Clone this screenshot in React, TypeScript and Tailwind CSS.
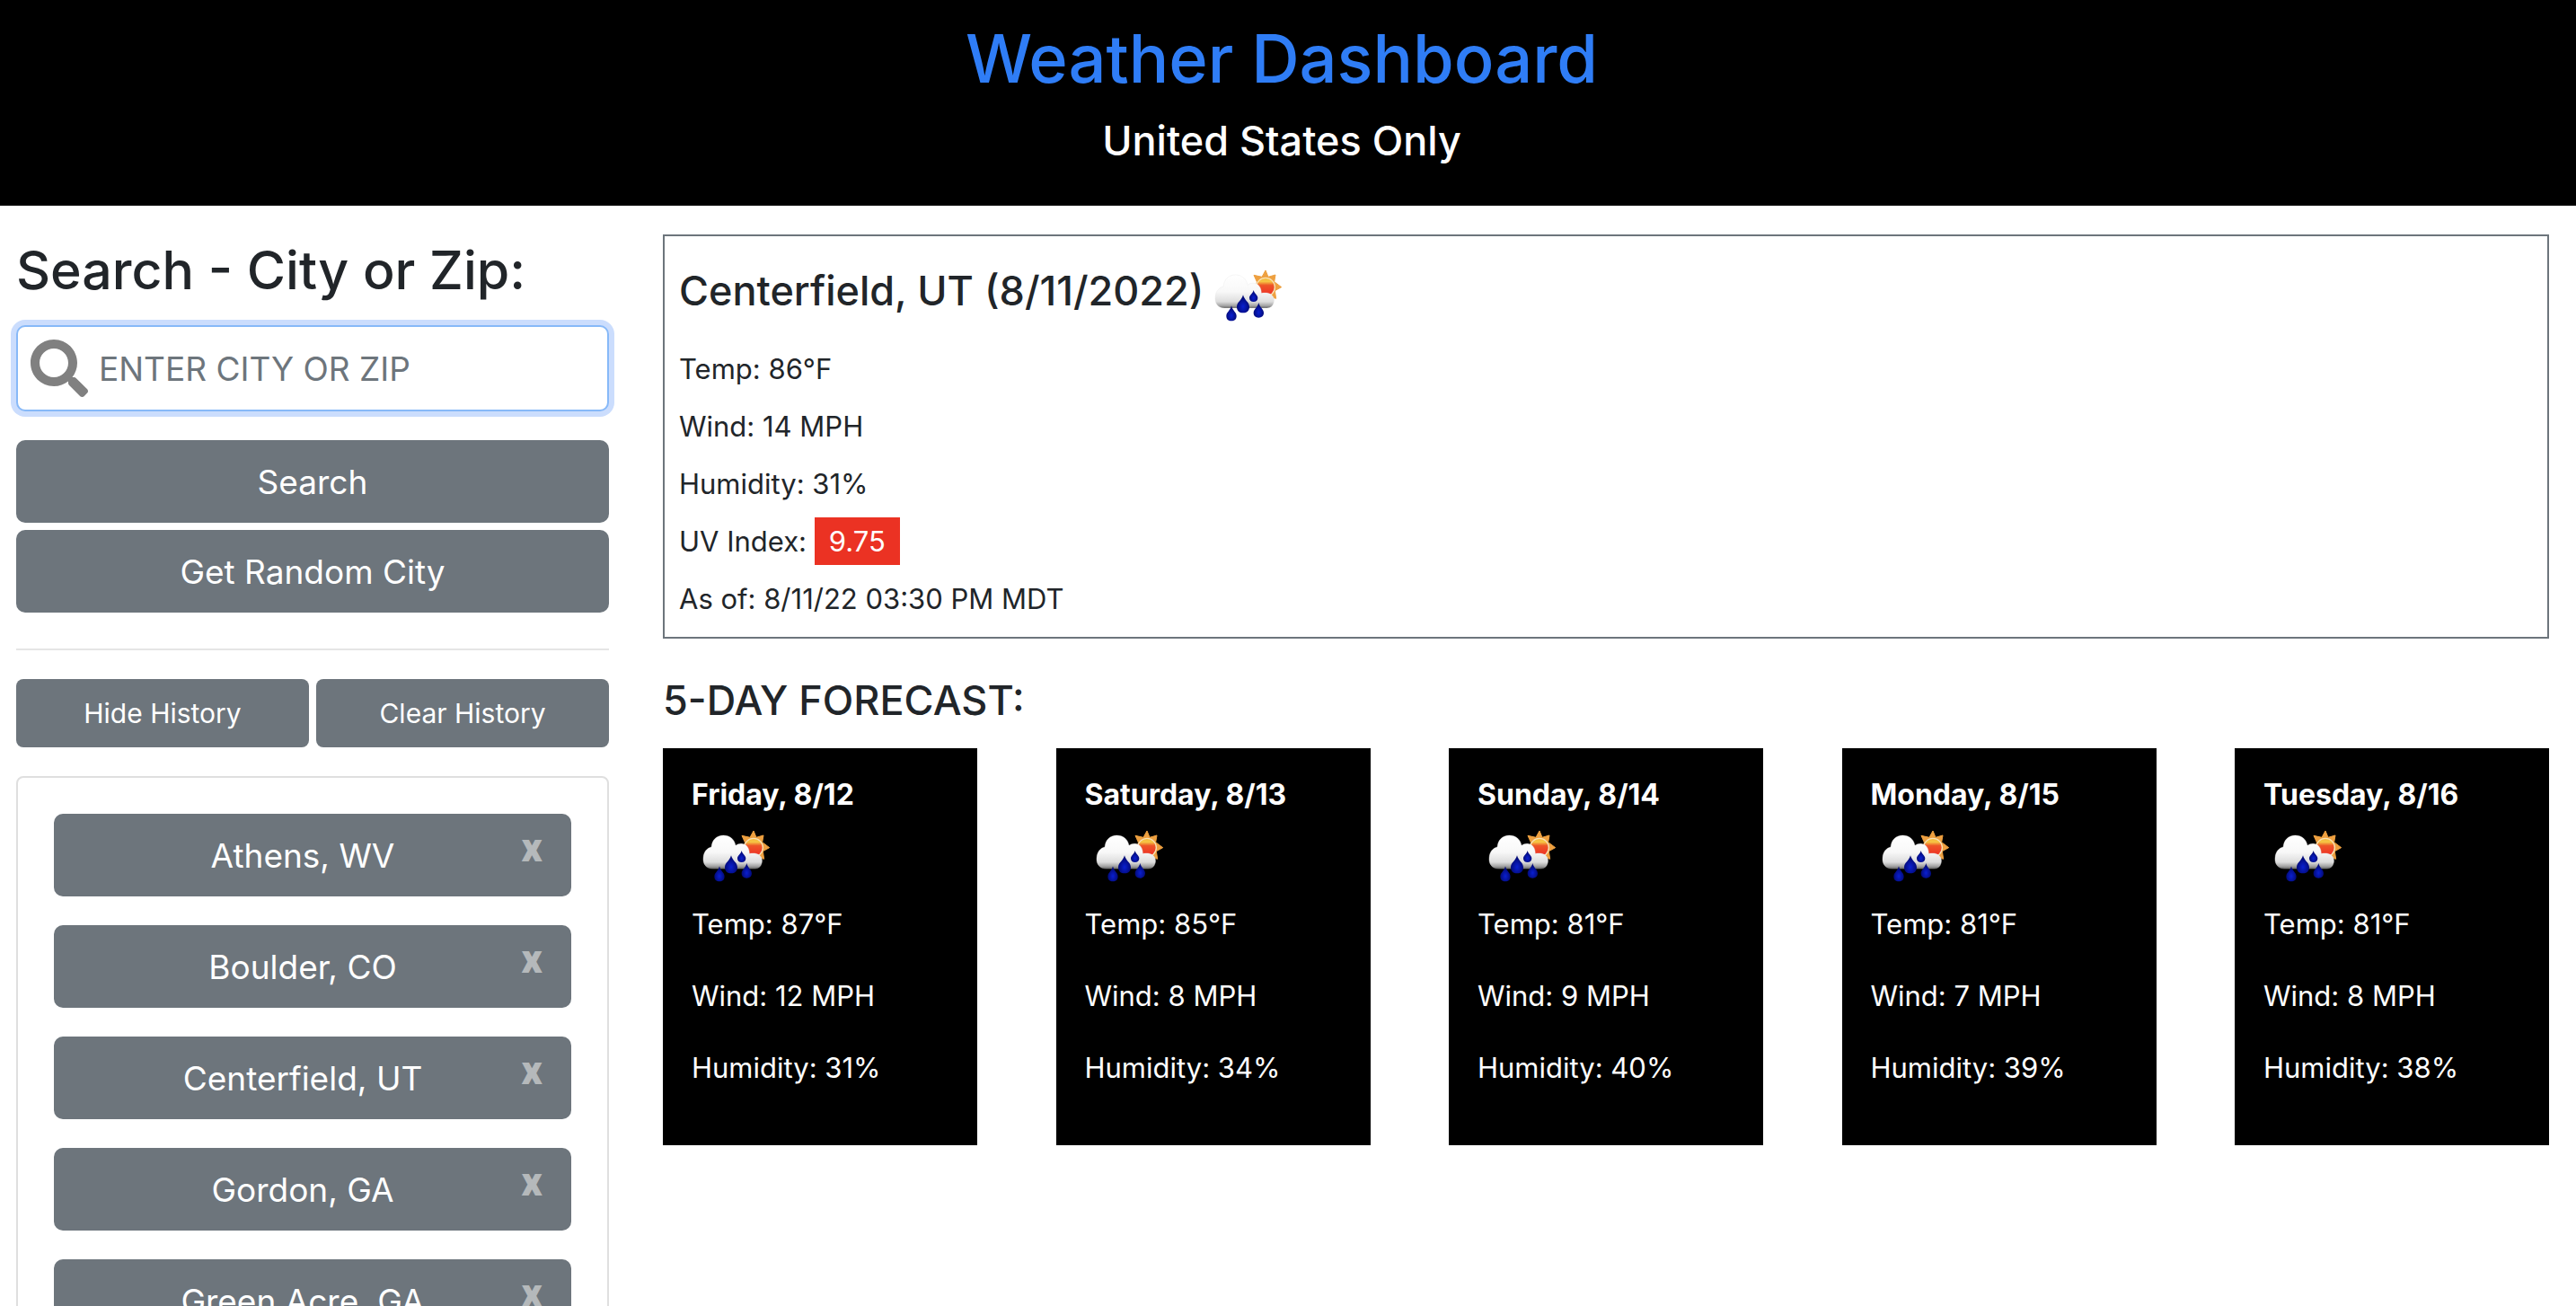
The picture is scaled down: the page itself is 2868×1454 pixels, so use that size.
import React, { useState } from "react";
import { FaSearch } from "react-icons/fa";

const initialHistory = [
  "Athens, WV",
  "Boulder, CO",
  "Centerfield, UT",
  "Gordon, GA",
  "Green Acre, GA",
];

const current = {
  title: "Centerfield, UT (8/11/2022)",
  temp: "86°F",
  wind: "14 MPH",
  humidity: "31%",
  uv: "9.75",
  asOf: "8/11/22 03:30 PM MDT",
};

const forecast = [
  { day: "Friday, 8/12", temp: "87°F", wind: "12 MPH", humidity: "31%" },
  { day: "Saturday, 8/13", temp: "85°F", wind: "8 MPH", humidity: "34%" },
  { day: "Sunday, 8/14", temp: "81°F", wind: "9 MPH", humidity: "40%" },
  { day: "Monday, 8/15", temp: "81°F", wind: "7 MPH", humidity: "39%" },
  { day: "Tuesday, 8/16", temp: "81°F", wind: "8 MPH", humidity: "38%" },
];

const rays =
  "M207 42 L216 64 L240 57 L236 80 L260 98 L238 110 L242 136 L222 130 L207 140 L184 128 L166 118 L176 100 L178 80 L168 58 L195 64 Z";

function RainIcon({ id }: { id: string }) {
  return (
    <svg
      viewBox="0 -6 300 288"
      className="block h-24 w-[100px] shrink-0"
      role="img"
      aria-label="Rain with sun"
    >
      <defs>
        <linearGradient id={`${id}-sun`} x1="0" y1="0" x2="0" y2="1">
          <stop offset="0" stopColor="#f5b83c" />
          <stop offset="0.2" stopColor="#f6c544" />
          <stop offset="0.4" stopColor="#ee5528" />
          <stop offset="1" stopColor="#ee2a24" />
        </linearGradient>
        <linearGradient
          id={`${id}-cloud`}
          gradientUnits="userSpaceOnUse"
          x1="0"
          y1="57"
          x2="0"
          y2="169"
        >
          <stop offset="0" stopColor="#ffffff" />
          <stop offset="0.5" stopColor="#f8f8f8" />
          <stop offset="0.8" stopColor="#dddddd" />
          <stop offset="0.93" stopColor="#a0a0a0" />
          <stop offset="1" stopColor="#505050" />
        </linearGradient>
        <radialGradient id={`${id}-drop`} cx="0.5" cy="0.65" r="0.5">
          <stop offset="0" stopColor="#0a1fd0" />
          <stop offset="1" stopColor="#020a78" />
        </radialGradient>
      </defs>
      <path d={rays} fill="#eea040" stroke="#eea040" strokeWidth="3" strokeLinejoin="round" />
      <circle cx="207" cy="98" r="31" fill={`url(#${id}-sun)`} stroke="#f8e0b4" strokeWidth="4" />
      <path
        d="M70 168 C48 168 37 152 39 132 C40 112 52 99 66 96 C68 72 84 57 106 57 C128 57 143 70 147 91 C153 86 161 84 168 85 C184 87 193 99 193 118 C204 116 215 116 223 121 C234 127 238 140 234 151 C231 162 223 168 212 168 Z"
        fill={`url(#${id}-cloud)`}
        stroke="#e4e4e4"
        strokeWidth="1"
      />
      <g fill={`url(#${id}-drop)`}>
        <path d="M132 124 C136 142 153 148 153 164 C153 177 144 184 132 184 C120 184 111 177 111 164 C111 148 128 142 132 124 Z" />
        <path d="M167 108 C169 119 181 124 181 134 C181 142 175 147 167 147 C159 147 153 142 153 134 C153 124 165 119 167 108 Z" />
        <path d="M93 160 C96 176 110 182 110 194 C110 205 103 211 93 211 C83 211 76 205 76 194 C76 182 90 176 93 160 Z" />
        <path d="M184 150 C187 165 201 171 201 184 C201 194 194 200 184 200 C174 200 167 194 167 184 C167 171 181 165 184 150 Z" />
      </g>
    </svg>
  );
}

const bigButton =
  "block h-[92px] w-full cursor-pointer rounded-[10px] bg-[#6d757c] pt-0.5 text-center text-[37px] text-white";
const smallButton =
  "h-[76px] flex-1 cursor-pointer rounded-lg bg-[#6d757c] text-center text-[30px] text-white";

export default function App() {
  const [history, setHistory] = useState(initialHistory);
  const [visible, setVisible] = useState(true);
  const [query, setQuery] = useState("");

  return (
    <div className="min-h-screen bg-white font-['Inter','Liberation_Sans',sans-serif] text-[31px] leading-[48px] text-[#212529]">
      <header className="bg-black pt-4 pr-[14px] pb-[43px] text-center font-medium">
        <h1 className="text-[74px] leading-[98px] text-[#2f7df6]">Weather Dashboard</h1>
        <h2 className="mt-3.5 text-[45px] leading-[58px] text-white">United States Only</h2>
      </header>

      <div className="grid grid-cols-[660fr_2100fr] gap-[60px] pt-8 pr-[30px] pl-[18px]">
        <aside className="min-w-0">
          <form onSubmit={(e) => e.preventDefault()}>
            <label htmlFor="city" className="mb-[22px] block text-[59px] leading-[79px] font-medium">
              Search - City or Zip:
            </label>
            <div className="relative">
              <FaSearch className="pointer-events-none absolute top-4 left-4 size-16 text-[#808080]" />
              <input
                id="city"
                type="text"
                value={query}
                onChange={(e) => setQuery(e.target.value)}
                placeholder="ENTER CITY OR ZIP"
                className="block h-24 w-full rounded-[10px] border-2 border-[#87b9f8] bg-white pr-8 pl-[90px] text-[37px] ring-6 ring-[#cbddfd] outline-none placeholder:text-[#6d757c]"
              />
            </div>
            <button type="submit" className={`${bigButton} mt-8`}>
              Search
            </button>
            <button type="button" className={`${bigButton} mt-2`}>
              Get Random City
            </button>
          </form>

          <hr className="mt-10 border-t-2 border-[#e5e5e5]" />

          <div className="mt-8 flex gap-2">
            <button type="button" className={smallButton} onClick={() => setVisible(!visible)}>
              Hide History
            </button>
            <button type="button" className={smallButton} onClick={() => setHistory([])}>
              Clear History
            </button>
          </div>

          {visible && (
            <ul className="mt-8 flex flex-col gap-8 rounded-lg border-2 border-[#dfdfdf] p-10">
              {history.map((city) => (
                <li key={city} className="relative">
                  <button type="button" className={`${bigButton} pr-[22px]`}>
                    {city}
                  </button>
                  <button
                    type="button"
                    aria-label={`Remove ${city}`}
                    onClick={() => setHistory(history.filter((c) => c !== city))}
                    className="absolute top-2 right-8 w-6 cursor-pointer text-center font-['Roboto',sans-serif] text-[45px] leading-[60px] font-black text-[#b5b9bb]"
                  >
                    x
                  </button>
                </li>
              ))}
            </ul>
          )}
        </aside>

        <main className="min-w-0">
          <section className="border-2 border-[#6d757c] px-4 pt-[22px] pb-[18px]">
            <h2 className="mb-1.5 flex items-start text-[45px] leading-[78px] font-medium">
              {current.title}
              <RainIcon id="current" />
            </h2>
            <div className="flex flex-col gap-4">
              <p>Temp: {current.temp}</p>
              <p>Wind: {current.wind}</p>
              <p>Humidity: {current.humidity}</p>
              <p>
                UV Index: <span className="bg-[#eb3223] px-4 py-2 text-white">{current.uv}</span>
              </p>
              <p>As of: {current.asOf}</p>
            </div>
          </section>

          <h2 className="mt-10 mb-6 text-[45px] leading-[58px] font-medium">5-DAY FORECAST:</h2>
          <div className="flex justify-between">
            {forecast.map((f, i) => (
              <article key={f.day} className="w-1/6 bg-black px-8 pt-7 pb-[62px] text-white">
                <h3 className="text-[32px] leading-[48px] font-bold">{f.day}</h3>
                <RainIcon id={`day${i}`} />
                <div className="flex flex-col gap-8">
                  <p>Temp: {f.temp}</p>
                  <p>Wind: {f.wind}</p>
                  <p>Humidity: {f.humidity}</p>
                </div>
              </article>
            ))}
          </div>
        </main>
      </div>
    </div>
  );
}
